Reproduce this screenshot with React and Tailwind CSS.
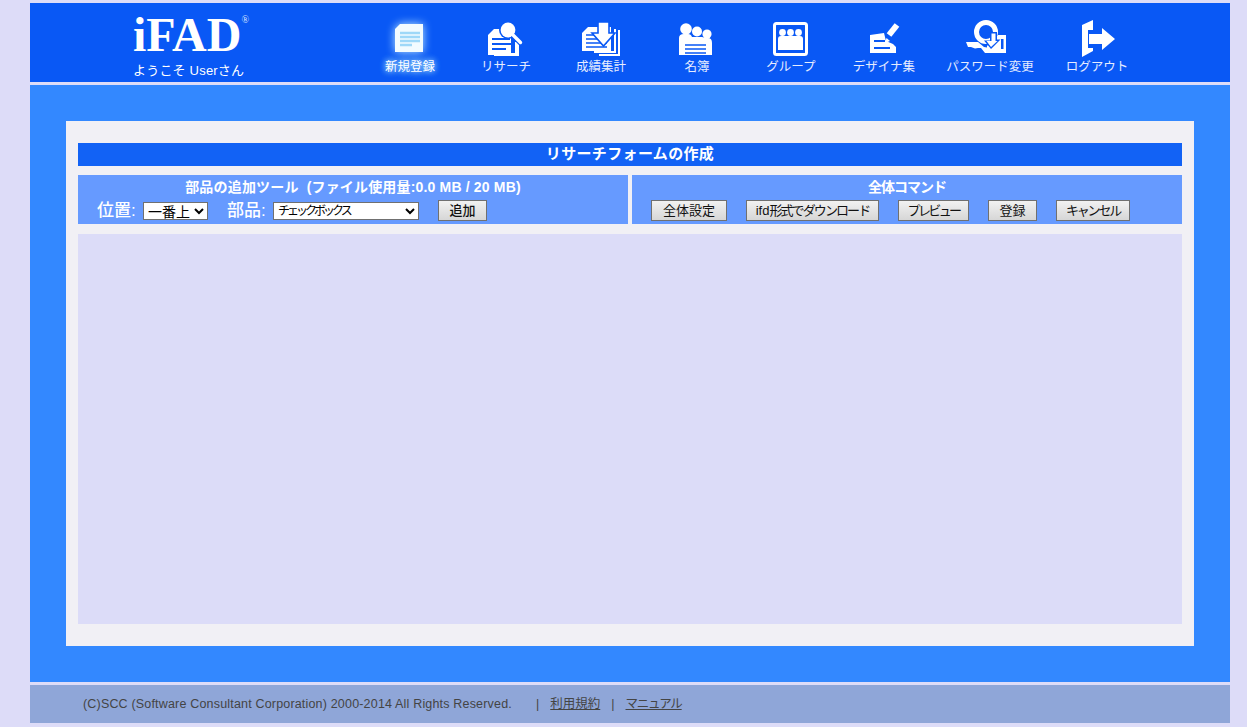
const jp = "font-['Liberation_Sans','Noto_Sans_CJK_JP',sans-serif]";

function Svg({ children, w = 40, glow = false }) {
  return (
    <svg width={w} height="36" viewBox={`0 0 ${w} 36`} className={`block overflow-visible ${glow ? "drop-shadow-[0_0_5px_#bfeaff]" : ""}`}>
      {children}
    </svg>
  );
}

const B = "#0958f5";

const icons = {
  new: (
    <Svg glow>
      <path d="M10 4H33V32H5V9Z" fill="#f2fbff" />
      <path d="M10 13H30M10 17H30M10 21H30M10 25H22" stroke="#9ed8f8" strokeWidth="2.4" />
    </Svg>
  ),
  research: (
    <Svg>
      <path d="M8 9H25V35H2V15Z" fill="#fff" />
      <path d="M29 22H33V36H8V33H29Z" fill="#fff" />
      <path d="M6 19H24M6 24H27M6 29H20" stroke={B} strokeWidth="2" />
      <circle cx="22" cy="10" r="9" fill={B} />
      <circle cx="22" cy="10" r="7.4" fill="#fff" />
      <path d="M27 15L35 23" stroke={B} strokeWidth="6" />
      <path d="M27 15L34.5 22.5" stroke="#fff" strokeWidth="3.4" strokeLinecap="round" />
    </Svg>
  ),
  totals: (
    <Svg>
      <path d="M33 9H35V33H13V31H33Z" fill="#fff" />
      <path d="M37 10H39V36H18V34H37Z" fill="#fff" />
      <path d="M7 7H30V31H1V13Z" fill="#fff" />
      <path d="M5 15H20M5 19H20M5 23H26M5 27H26" stroke={B} strokeWidth="1.6" />
      <path d="M17 2H28V13H34L22.5 26L11 13H17Z" fill="#fff" stroke={B} strokeWidth="1.6" />
    </Svg>
  ),
  roster: (
    <Svg>
      <circle cx="9" cy="9" r="5.8" fill="#fff" />
      <circle cx="20" cy="11.5" r="5" fill="#fff" />
      <circle cx="30" cy="14" r="4.6" fill="#fff" />
      <path d="M2 35V18Q2 14 7 14H11Q14 14 15 17H25Q28 18 31 18Q35 18 35 23V35Z" fill="#fff" />
      <path d="M8 25H29M8 29H29M8 33H29" stroke={B} strokeWidth="1.6" />
    </Svg>
  ),
  group: (
    <Svg>
      <rect x="3.5" y="3.5" width="32" height="31" rx="2" fill={B} stroke="#fff" strokeWidth="3" />
      <circle cx="11.5" cy="12.5" r="3.4" fill="#fff" />
      <circle cx="19.5" cy="12.5" r="3.4" fill="#fff" />
      <circle cx="27.5" cy="12.5" r="3.4" fill="#fff" />
      <path d="M7 30V19Q7 16 10 16H29Q32 16 32 19V30Z" fill="#fff" />
    </Svg>
  ),
  design: (
    <Svg>
      <path d="M6 15L20 13L22 21L29 24L32 27V33H6Z" fill="#fff" />
      <path d="M10 21H21M10 28H26" stroke={B} strokeWidth="2" />
      <path d="M33 5L25 15" stroke="#fff" strokeWidth="6" />
      <path d="M22.5 18L21 23L26 21Z" fill="#fff" />
    </Svg>
  ),
  password: (
    <Svg w={60}>
      <circle cx="26" cy="12" r="9.5" fill="none" stroke="#fff" strokeWidth="5" />
      <path d="M6 22H18L24 27L30 28V33H25L21 28H18L15 28.5L11 27H8Z" fill="#fff" />
      <path d="M27 33V26L38 15H46V33Z" fill="#fff" />
      <path d="M41 19H43.5V29H41Z" fill={B} />
      <path d="M30 12H37V19.5H40.5L31 29L24 20.5H30Z" fill={B} />
      <path d="M31.5 13.5H35.5V21H37.5L31 27L26.5 21H31.5Z" fill="#fff" />
    </Svg>
  ),
  logout: (
    <Svg>
      <path d="M5 5L16 0V10H11V28H16V31L5 37Z" fill="#fff" />
      <path d="M12 14H25V8L38 19L25 30V24H12Z" fill="#fff" />
    </Svg>
  ),
};

const nav = [
  ["新規登録", "new", "w-[96px]", true],
  ["リサーチ", "research", "w-[96px]"],
  ["成績集計", "totals", "w-[94px]"],
  ["名簿", "roster", "w-[98px]"],
  ["グループ", "group", "w-[90px]"],
  ["デザイナ集", "design", "w-[96px]"],
  ["パスワード変更", "password", "w-[116px]"],
  ["ログアウト", "logout", "w-[98px]"],
];

function Btn({ children, w, t = "" }) {
  return (
    <button className={`${w} ${t} h-[21px] shrink-0 whitespace-nowrap border border-[#707070] bg-gradient-to-b from-[#f2f2f2] to-[#d6d6d6] text-[13px] leading-none text-[#111]`}>
      {children}
    </button>
  );
}

export default function App() {
  return (
    <div className={`${jp} min-h-[727px] overflow-hidden bg-[#dddcf8] pl-[30px] pr-[17px] pt-[3px]`}>
      <header className="flex h-[79px] bg-[#0958f5] text-white">
        <div className="w-[332px] shrink-0 pl-[103px] pt-[8px]">
          <div className="flex h-[47px] items-start font-['Liberation_Serif',serif] text-[48px] font-bold leading-[47px]">
            iFAD<span className="mt-[3px] text-[10px] font-normal leading-[12px] text-[#dbe6ff]">®</span>
          </div>
          <div className="mt-[5px] text-[13px] leading-[15px] tracking-[0.2px] whitespace-nowrap">ようこそ Userさん</div>
        </div>
        <nav className="flex">
          {nav.map(([label, icon, w, active]) => (
            <div key={label} className={`${w} flex shrink-0 flex-col items-center pt-[17px]`}>
              {icons[icon]}
              <div className={`mt-[4px] text-[12.5px] leading-[14px] whitespace-nowrap ${active ? "text-white [text-shadow:0_0_6px_#9fdcff,0_0_6px_#9fdcff]" : "text-[#e6ecff]"}`}>
                {label}
              </div>
            </div>
          ))}
        </nav>
      </header>

      <main className="mt-[3px] h-[597px] bg-[#3388ff] px-[36px] pt-[36px]">
        <div className="h-[525px] bg-[#f1f0f5] px-[12px] pt-[22px]">
          <h1 className="h-[23px] bg-[#1262f5] text-center text-[15px] font-bold leading-[22px] tracking-[0.35px] text-white">
            リサーチフォームの作成
          </h1>
          <div className="mt-[9px] flex h-[49px] gap-[4px]">
            <section className="w-[550px] bg-[#669aff] text-white">
              <div className="pt-[5px] text-center text-[14px] font-semibold leading-[15px] tracking-[0.17px] whitespace-pre">
                部品の追加ツール  (ファイル使用量:0.0 MB / 20 MB)
              </div>
              <div className="mt-[5px] flex h-[21px] items-center pl-[19px] text-[17px] font-medium">
                <span className="w-[46px] shrink-0 whitespace-nowrap">位置:</span>
                <select className="h-[18px] w-[65px] border border-[#707070] bg-white text-[14px] font-normal leading-none text-black" defaultValue="一番上">
                  <option>一番上</option>
                  <option>一番下</option>
                </select>
                <span className="ml-[19px] w-[46px] shrink-0 whitespace-nowrap">部品:</span>
                <select className="h-[18px] w-[146px] border border-[#707070] bg-white text-[12px] font-normal leading-none tracking-[-3px] text-black" defaultValue="チェックボックス">
                  <option>チェックボックス</option>
                  <option>ラジオボタン</option>
                </select>
                <div className="ml-[19px] flex">
                  <Btn w="w-[49px]">追加</Btn>
                </div>
              </div>
            </section>
            <section className="w-[550px] bg-[#669aff] text-white">
              <div className="pt-[5px] text-center text-[14px] font-semibold leading-[15px] tracking-[-1px]">全体コマンド</div>
              <div className="mt-[5px] flex gap-[19px] pl-[19px]">
                <Btn w="w-[76px]">全体設定</Btn>
                <Btn w="w-[133px]">
                  ifd<span className="tracking-[-1.9px]">形式でダウンロード</span>
                </Btn>
                <Btn w="w-[71px]" t="tracking-[-2.6px]">プレビュー</Btn>
                <Btn w="w-[49px]">登録</Btn>
                <Btn w="w-[74px]" t="tracking-[-2.2px]">キャンセル</Btn>
              </div>
            </section>
          </div>
          <div className="mt-[10px] h-[390px] bg-[#dcdcf8]" />
        </div>
      </main>

      <footer className="mt-[3px] flex h-[38px] items-center bg-[#8fa6d8] pl-[53px] text-[12.5px] text-[#444] whitespace-nowrap">
        <span className="w-[428px] tracking-[0.18px]">(C)SCC (Software Consultant Corporation) 2000-2014 All Rights Reserved.</span>
        <span className="ml-[25px]">|</span>
        <a className="ml-[11px] underline" href="#">利用規約</a>
        <span className="ml-[11px]">|</span>
        <a className="ml-[11px] underline tracking-[-1.2px]" href="#">マニュアル</a>
      </footer>
    </div>
  );
}
